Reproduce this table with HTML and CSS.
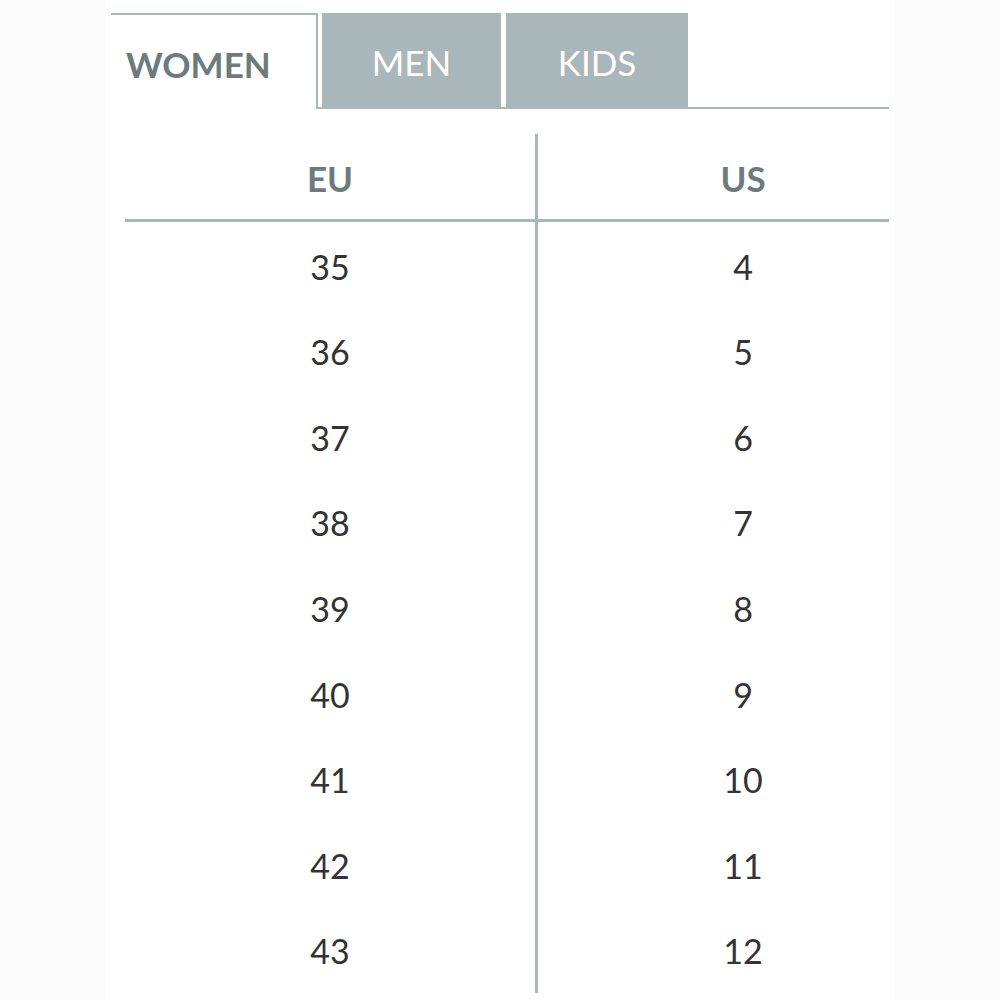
FILE: index.html
```html
<!DOCTYPE html>
<html lang="en">
<head>
<meta charset="utf-8">
<title>Size chart</title>
<link rel="stylesheet" href="styles.css">
</head>
<body>
<div class="panel">
  <div class="tabs">
    <div class="tab active">WOMEN</div>
    <div class="tabs-rest">
      <div class="tab men">MEN</div>
      <div class="tab kids">KIDS</div>
    </div>
  </div>
  <div class="chart">
    <div class="col eu">
      <div class="head">EU</div>
      <div class="cells">
        <div class="cell">35</div>
        <div class="cell">36</div>
        <div class="cell">37</div>
        <div class="cell">38</div>
        <div class="cell">39</div>
        <div class="cell">40</div>
        <div class="cell">41</div>
        <div class="cell">42</div>
        <div class="cell">43</div>
      </div>
    </div>
    <div class="col us">
      <div class="head">US</div>
      <div class="cells">
        <div class="cell">4</div>
        <div class="cell">5</div>
        <div class="cell">6</div>
        <div class="cell">7</div>
        <div class="cell">8</div>
        <div class="cell">9</div>
        <div class="cell">10</div>
        <div class="cell">11</div>
        <div class="cell">12</div>
      </div>
    </div>
  </div>
</div>
</body>
</html>
```

FILE: styles.css
```css
html, body {
  margin: 0;
  padding: 0;
}
body {
  background: #fcfcfc;
  font-family: Lato, "Open Sans", sans-serif;
  height: 1000px;
  overflow: hidden;
}
.panel {
  margin-left: 111px;
  width: 778px;
  height: 1000px;
  background: #ffffff;
  padding-top: 13px;
  box-sizing: border-box;
}
.tabs {
  display: flex;
  height: 96px;
}
.tab {
  display: flex;
  align-items: center;
  justify-content: center;
  box-sizing: border-box;
  padding-top: 4px;
  font-size: 35px;
}
.tab.active {
  width: 207px;
  border-top: 2px solid #a9b6ba;
  border-right: 2px solid #a9b6ba;
  justify-content: flex-start;
  padding-left: 15px;
  color: #6e7b7d;
  font-weight: 700;
}
.tabs-rest {
  flex: 1;
  display: flex;
  gap: 5px;
  margin-left: -2px;
  padding-left: 6px;
  border-bottom: 2px solid #a9b6ba;
}
.tab.men,
.tab.kids {
  background: #a9b7bb;
  color: #ffffff;
  font-weight: 400;
}
.tab.men {
  width: 179px;
}
.tab.kids {
  width: 182px;
}
.chart {
  display: flex;
  margin-top: 25px;
  margin-left: 14px;
}
.col {
  display: flex;
  flex-direction: column;
}
.col.eu {
  width: 413px;
  border-right: 3px solid #a9b6ba;
  box-sizing: border-box;
}
.col.us {
  width: 351px;
  padding-left: 59px;
  box-sizing: border-box;
}
.head {
  height: 88px;
  box-sizing: border-box;
  padding-top: 2px;
  border-bottom: 3px solid #a9b6ba;
  display: flex;
  align-items: center;
  justify-content: center;
  font-size: 35px;
  font-weight: 700;
  color: #6e7b7d;
}
.col.us .head {
  margin-left: -59px;
  padding-left: 59px;
}
.cells {
  padding-top: 1.5px;
}
.cell {
  height: 85.56px;
  display: flex;
  align-items: center;
  justify-content: center;
  font-size: 34px;
  color: #333333;
}
```
